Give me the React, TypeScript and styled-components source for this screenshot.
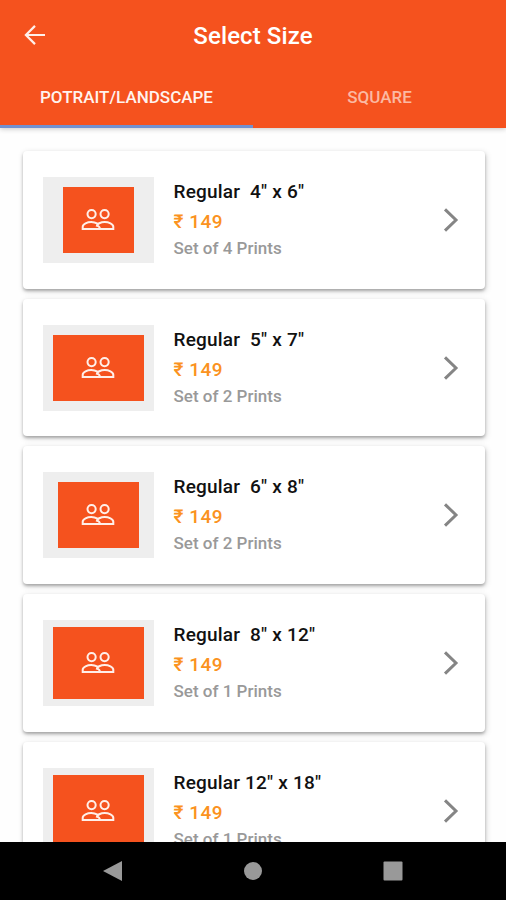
import React from "react";
import styled, { createGlobalStyle } from "styled-components";

const GlobalStyle = createGlobalStyle`
  * { box-sizing: border-box; }
  body { margin: 0; background: #fefefe; font-family: Roboto, "Noto Sans", sans-serif; }
`;

const Screen = styled.div`
  width: 506px;
  height: 900px;
  display: flex;
  flex-direction: column;
  overflow: hidden;
  background: #fefefe;
`;

const Header = styled.header`
  flex: none;
  height: 128px;
  background: #f5521e;
  color: #fff;
  box-shadow: 0 1px 5px rgba(0, 0, 0, 0.22);
  z-index: 1;
`;

const TitleBar = styled.div`
  height: 70px;
  display: grid;
  grid-template-columns: 70px 1fr 70px;
  align-items: center;
`;

const BackButton = styled.button`
  height: 70px;
  padding: 0;
  border: 0;
  background: none;
  display: flex;
  align-items: center;
  justify-content: center;
`;

const Title = styled.h1`
  margin: 2px 0 0;
  text-align: center;
  font-size: 24px;
  line-height: 28px;
  font-weight: 500;
  letter-spacing: 0.1px;
`;

const Tabs = styled.nav`
  display: grid;
  grid-template-columns: 1fr 1fr;
  height: 58px;
`;

const Tab = styled.button<{ $active?: boolean }>`
  border: 0;
  border-bottom: 3px solid ${(p) => (p.$active ? "#7190d0" : "transparent")};
  padding: 0 0 1px;
  background: none;
  color: ${(p) => (p.$active ? "#fff3ee" : "#fbb9a2")};
  font: 500 17px/20px Roboto, sans-serif;
`;

const List = styled.main`
  flex: 1;
  min-height: 0;
  overflow: hidden;
  padding: 23px 21.5px 0 23px;
  display: flex;
  flex-direction: column;
  gap: 10px;
`;

const Card = styled.article`
  flex: none;
  height: 137.7px;
  padding: 0 24px 0 20px;
  display: grid;
  grid-template-columns: 110.5px 1fr 20px;
  column-gap: 20px;
  align-items: center;
  border-radius: 4px;
  background: #fff;
  box-shadow: 0 2px 3px rgba(0, 0, 0, 0.25), 1px 2px 6px rgba(0, 0, 0, 0.17);
`;

const Frame = styled.div`
  height: 86px;
  display: flex;
  align-items: center;
  justify-content: center;
  background: #eee;
`;

const Print = styled.div<{ $w: number; $h: number }>`
  width: ${(p) => p.$w}px;
  height: ${(p) => p.$h}px;
  display: flex;
  align-items: center;
  justify-content: center;
  background: #f5521e;
`;

const Details = styled.div`
  height: 86px;
  white-space: pre;
`;

const Name = styled.div`
  font-size: 19px;
  line-height: 30px;
  font-weight: 500;
  letter-spacing: 0.2px;
  color: #111;
`;

const Price = styled.div`
  font-size: 19px;
  line-height: 29px;
  font-weight: 500;
  letter-spacing: 0.5px;
  color: #fb9220;
`;

const Count = styled.div`
  font-size: 17px;
  line-height: 24px;
  font-weight: 500;
  color: #999;
`;

const SystemBar = styled.footer`
  flex: none;
  height: 58px;
  padding: 0 43px;
  background: #000;
  display: grid;
  grid-template-columns: 1fr 1fr 1fr;
  align-items: center;
  justify-items: center;
`;

const sizes = [
  { name: 'Regular  4" x 6"', count: 4, w: 71.5, h: 66 },
  { name: 'Regular  5" x 7"', count: 2, w: 91, h: 66 },
  { name: 'Regular  6" x 8"', count: 2, w: 81, h: 66 },
  { name: 'Regular  8" x 12"', count: 1, w: 91, h: 71.5 },
  { name: 'Regular 12" x 18"', count: 1, w: 91, h: 71.5 },
];

const BackIcon = () => (
  <svg width="22" height="22" viewBox="0 0 22 22" fill="none" stroke="#fff0ea" strokeWidth="2.2">
    <path d="M21 11H2.5M11 1.9L1.9 11l9.1 9.1" />
  </svg>
);

const PeopleIcon = () => (
  <svg width="34" height="24" viewBox="0 0 34 24" fill="none" stroke="#ffefe9" strokeWidth="2">
    <circle cx="10.6" cy="6.1" r="4.1" />
    <circle cx="23.6" cy="6.1" r="4.1" />
    <path d="M17.3 15.9C14.5 14.6 12.8 14 10.3 14 6.4 14 1.7 15.9 1.7 18.7v2.2h30.6v-2.2c0-2.8-4.7-4.7-8.6-4.7-3.8 0-8 1.9-8 4.4" />
    <path d="M15.7 17.4c2.2.8 3.2 1.8 3.2 3.5" />
  </svg>
);

const Chevron = () => (
  <svg width="20" height="26" viewBox="0 0 20 26" fill="none" stroke="#858585" strokeWidth="3">
    <path d="M4 2.3L15 13 4 23.7" />
  </svg>
);

export default function App() {
  return (
    <>
      <GlobalStyle />
      <Screen>
        <Header>
          <TitleBar>
            <BackButton aria-label="Back"><BackIcon /></BackButton>
            <Title>Select Size</Title>
          </TitleBar>
          <Tabs>
            <Tab $active>POTRAIT/LANDSCAPE</Tab>
            <Tab>SQUARE</Tab>
          </Tabs>
        </Header>
        <List>
          {sizes.map((s) => (
            <Card key={s.name}>
              <Frame>
                <Print $w={s.w} $h={s.h}><PeopleIcon /></Print>
              </Frame>
              <Details>
                <Name>{s.name}</Name>
                <Price>₹ 149</Price>
                <Count>Set of {s.count} Prints</Count>
              </Details>
              <Chevron />
            </Card>
          ))}
        </List>
        <SystemBar>
          <svg width="20" height="22" viewBox="0 0 20 22"><path d="M0 11L19 1v20z" fill="#999" /></svg>
          <svg width="18" height="18" viewBox="0 0 18 18"><circle cx="9" cy="9" r="9" fill="#999" /></svg>
          <svg width="20" height="20" viewBox="0 0 20 20"><rect x=".5" y=".5" width="19" height="19" rx="1" fill="#999" /></svg>
        </SystemBar>
      </Screen>
    </>
  );
}
